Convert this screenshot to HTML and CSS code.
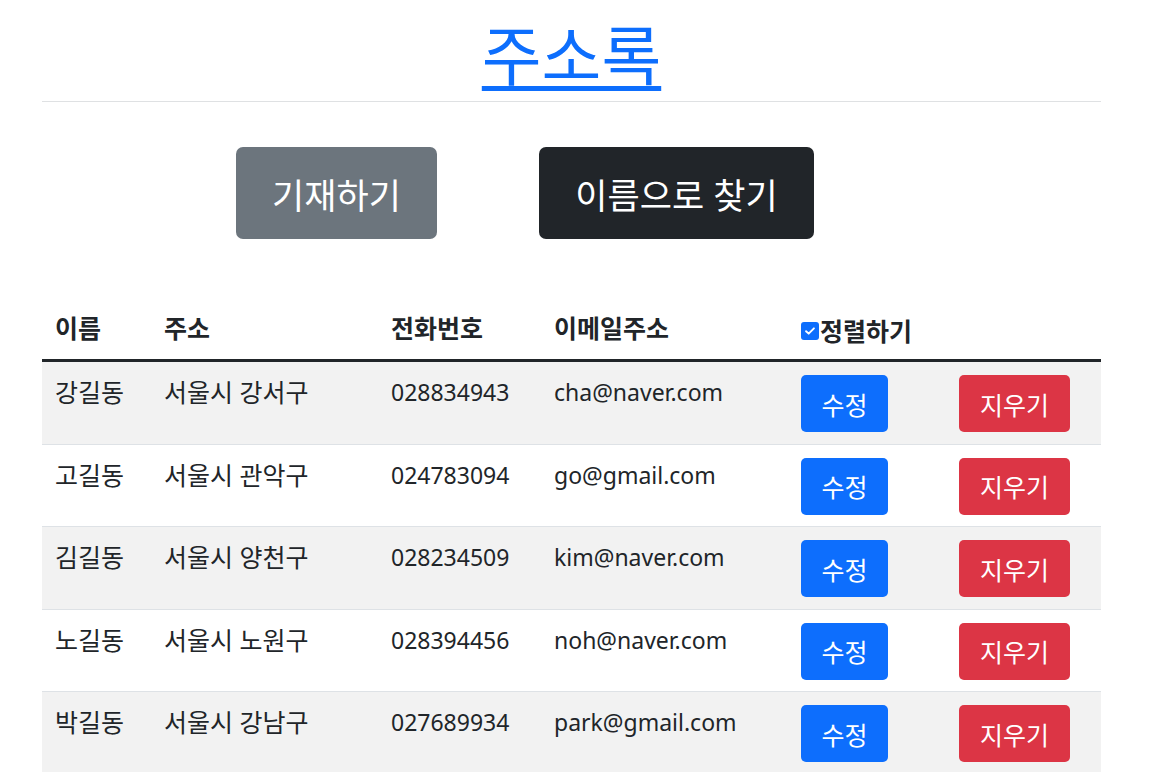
FILE: index.html
```html
<!DOCTYPE html>
<html lang="ko">
<head>
<meta charset="utf-8">
<title>주소록</title>
<link rel="stylesheet" href="styles.css">
</head>
<body>
<div class="container">
  <h1 class="title"><a href="#">주소록</a></h1>
  <hr class="divider">
  <div class="actions">
    <button class="btn btn-lg btn-secondary">기재하기</button>
    <button class="btn btn-lg btn-dark">이름으로 찾기</button>
  </div>
  <table class="table">
    <colgroup>
      <col class="c-name"><col class="c-addr"><col class="c-phone"><col class="c-mail"><col class="c-edit"><col class="c-del">
    </colgroup>
    <thead>
      <tr>
        <th>이름</th>
        <th>주소</th>
        <th>전화번호</th>
        <th>이메일주소</th>
        <th><label class="sort"><span class="check"><svg viewBox="0 0 16 16" width="14" height="14"><path d="M3.5 8.2 6.5 11 12.5 5" fill="none" stroke="#fff" stroke-width="2.2" stroke-linecap="round" stroke-linejoin="round"/></svg></span>정렬하기</label></th>
        <th></th>
      </tr>
    </thead>
    <tbody>
      <tr class="odd"><td class="ko">강길동</td><td class="ko">서울시 강서구</td><td>028834943</td><td>cha@naver.com</td><td><button class="btn btn-sm btn-primary">수정</button></td><td><button class="btn btn-sm btn-danger">지우기</button></td></tr>
      <tr><td class="ko">고길동</td><td class="ko">서울시 관악구</td><td>024783094</td><td>go@gmail.com</td><td><button class="btn btn-sm btn-primary">수정</button></td><td><button class="btn btn-sm btn-danger">지우기</button></td></tr>
      <tr class="odd"><td class="ko">김길동</td><td class="ko">서울시 양천구</td><td>028234509</td><td>kim@naver.com</td><td><button class="btn btn-sm btn-primary">수정</button></td><td><button class="btn btn-sm btn-danger">지우기</button></td></tr>
      <tr><td class="ko">노길동</td><td class="ko">서울시 노원구</td><td>028394456</td><td>noh@naver.com</td><td><button class="btn btn-sm btn-primary">수정</button></td><td><button class="btn btn-sm btn-danger">지우기</button></td></tr>
      <tr class="odd"><td class="ko">박길동</td><td class="ko">서울시 강남구</td><td>027689934</td><td>park@gmail.com</td><td><button class="btn btn-sm btn-primary">수정</button></td><td><button class="btn btn-sm btn-danger">지우기</button></td></tr>
    </tbody>
  </table>
</div>
</body>
</html>
```
FILE: styles.css
```css
html, body {
  margin: 0;
  padding: 0;
  background: #fff;
}
body {
  font-family: "Noto Sans", "Noto Sans CJK KR", sans-serif;
  color: #212529;
  font-size: 23px;
  line-height: 34px;
}
.container {
  width: 1059px;
  margin-left: 42px;
}
.title {
  margin: 0;
  padding-top: 16px;
  text-align: center;
  font-size: 65px;
  font-weight: 400;
  line-height: 78px;
}
.title a {
  color: #0d6efd;
  text-decoration: underline;
  text-decoration-thickness: 5px;
  text-underline-offset: 6px;
}
.divider {
  margin: 7px 0 0;
  border: 0;
  border-top: 1px solid #dfe1e3;
  height: 0;
}
.actions {
  display: flex;
  gap: 102px;
  padding-left: 194px;
  margin-top: 45px;
  margin-bottom: 59px;
}
.btn {
  border: 0;
  color: #fff;
  font-family: inherit;
  white-space: nowrap;
  padding: 0;
  cursor: pointer;
}
.btn-lg {
  height: 92px;
  font-size: 35px;
  border-radius: 7px;
}
.btn-secondary { background: #6c757d; width: 201px; }
.btn-dark { background: #212529; width: 275px; }
.btn-sm {
  height: 57px;
  font-size: 25px;
  border-radius: 5px;
}
.btn-primary { background: #0d6efd; width: 87px; }
.btn-danger { background: #dc3545; width: 111px; }
.table {
  width: 1059px;
  border-collapse: collapse;
  table-layout: fixed;
}
.c-name { width: 109px; }
.c-addr { width: 227px; }
.c-phone { width: 163px; }
.c-mail { width: 247px; }
.c-edit { width: 158px; }
.c-del { width: 155px; }
.table th, .table td {
  text-align: left;
  vertical-align: top;
  padding: 13px 13px 11.5px;
  border-bottom: 1px solid #dee2e6;
  white-space: nowrap;
}
.table th {
  font-size: 25px;
  font-weight: 700;
  padding-bottom: 11px;
  border-bottom: 3px solid #212529;
}
.table td.ko {
  font-size: 25px;
}
.table tr.odd td {
  background: #f2f2f2;
}
.sort {
  display: inline-flex;
  align-items: center;
  gap: 1px;
}
.check {
  display: inline-flex;
  align-items: center;
  justify-content: center;
  width: 18px;
  height: 18px;
  border-radius: 3px;
  background: #0d6efd;
}
```
